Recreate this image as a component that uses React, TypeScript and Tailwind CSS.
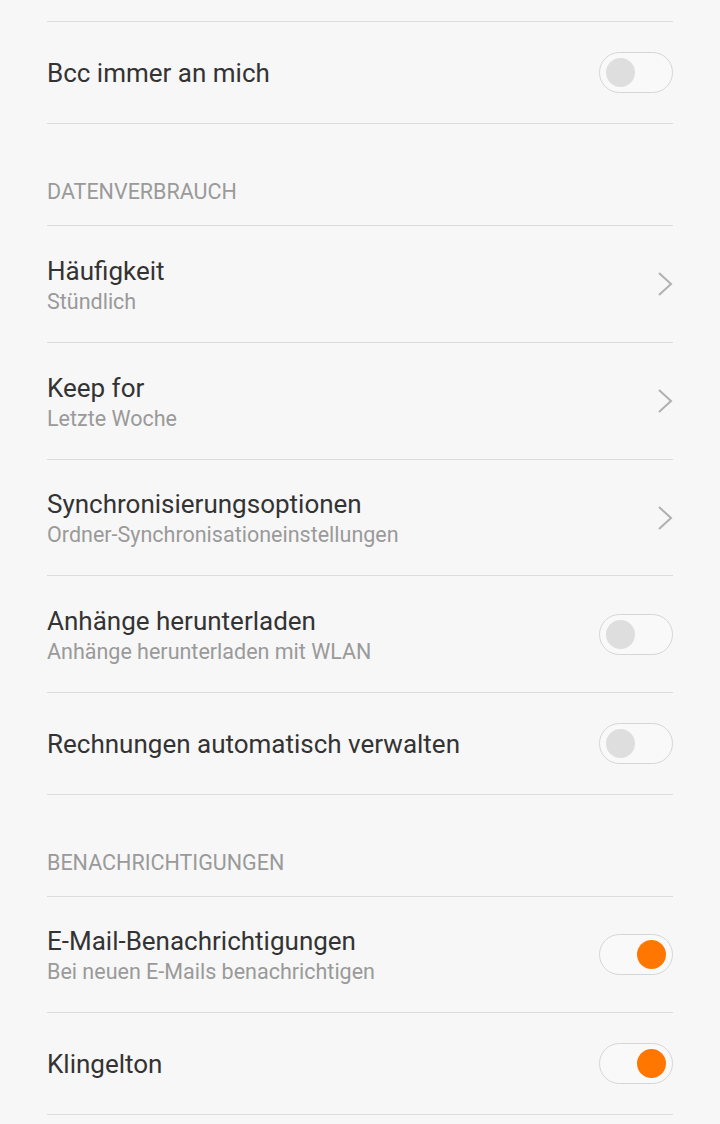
import React from "react";

type Row =
  | { kind: "header"; label: string }
  | { kind: "toggle"; title: string; subtitle?: string; on: boolean; h: string }
  | { kind: "link"; title: string; subtitle: string; h: string };

const rows: Row[] = [
  { kind: "toggle", title: "Bcc immer an mich", on: false, h: "h-[102px]" },
  { kind: "header", label: "DATENVERBRAUCH" },
  { kind: "link", title: "Häufigkeit", subtitle: "Stündlich", h: "h-[117px]" },
  { kind: "link", title: "Keep for", subtitle: "Letzte Woche", h: "h-[117px]" },
  {
    kind: "link",
    title: "Synchronisierungsoptionen",
    subtitle: "Ordner-Synchronisationeinstellungen",
    h: "h-[116px]",
  },
  {
    kind: "toggle",
    title: "Anhänge herunterladen",
    subtitle: "Anhänge herunterladen mit WLAN",
    on: false,
    h: "h-[117px]",
  },
  {
    kind: "toggle",
    title: "Rechnungen automatisch verwalten",
    on: false,
    h: "h-[102px]",
  },
  { kind: "header", label: "BENACHRICHTIGUNGEN" },
  {
    kind: "toggle",
    title: "E-Mail-Benachrichtigungen",
    subtitle: "Bei neuen E-Mails benachrichtigen",
    on: true,
    h: "h-[116px]",
  },
  { kind: "toggle", title: "Klingelton", on: true, h: "h-[102px]" },
];

function Toggle({ on }: { on: boolean }) {
  return (
    <div
      className={`flex h-[41px] w-[74px] shrink-0 items-center rounded-full border border-[#d6d6d6] bg-[#f9f9f9] px-[6px] ${
        on ? "justify-end" : "justify-start"
      }`}
    >
      <div
        className={`h-[29px] w-[29px] rounded-full ${
          on ? "bg-[#ff7700]" : "bg-[#dedede]"
        }`}
      />
    </div>
  );
}

function Chevron() {
  return (
    <svg width="16" height="26" viewBox="0 0 16 26" className="shrink-0">
      <path
        d="M2 2 L14 13 L2 24"
        fill="none"
        stroke="#b0b0b0"
        strokeWidth="2"
      />
    </svg>
  );
}

function Titles({ title, subtitle }: { title: string; subtitle?: string }) {
  return (
    <div className="flex flex-col pt-[2px]">
      <span className="text-[26px] leading-[31px] text-[#333333]">{title}</span>
      {subtitle && (
        <span className="mt-[2px] text-[21.5px] leading-[26px] text-[#9a9a9a]">
          {subtitle}
        </span>
      )}
    </div>
  );
}

export default function App() {
  return (
    <div
      className="min-h-[1124px] w-full bg-[#f7f7f7] px-[47px]"
      style={{ fontFamily: "Roboto, 'Noto Sans', sans-serif" }}
    >
      {/* top spacer */}
      <div className="h-[22px] border-b border-[#dcdcdc]" />

      {rows.map((row, i) => {
        if (row.kind === "header") {
          return (
            <div
              key={i}
              className="flex h-[102px] items-end border-b border-[#dcdcdc] pb-[20px]"
            >
              <span className="text-[21.5px] leading-[26px] text-[#9a9a9a]">
                {row.label}
              </span>
            </div>
          );
        }

        return (
          <div
            key={i}
            className={`flex items-center justify-between border-b border-[#dcdcdc] ${row.h}`}
          >
            <Titles title={row.title} subtitle={row.subtitle} />
            {row.kind === "toggle" ? <Toggle on={row.on} /> : <Chevron />}
          </div>
        );
      })}
    </div>
  );
}
